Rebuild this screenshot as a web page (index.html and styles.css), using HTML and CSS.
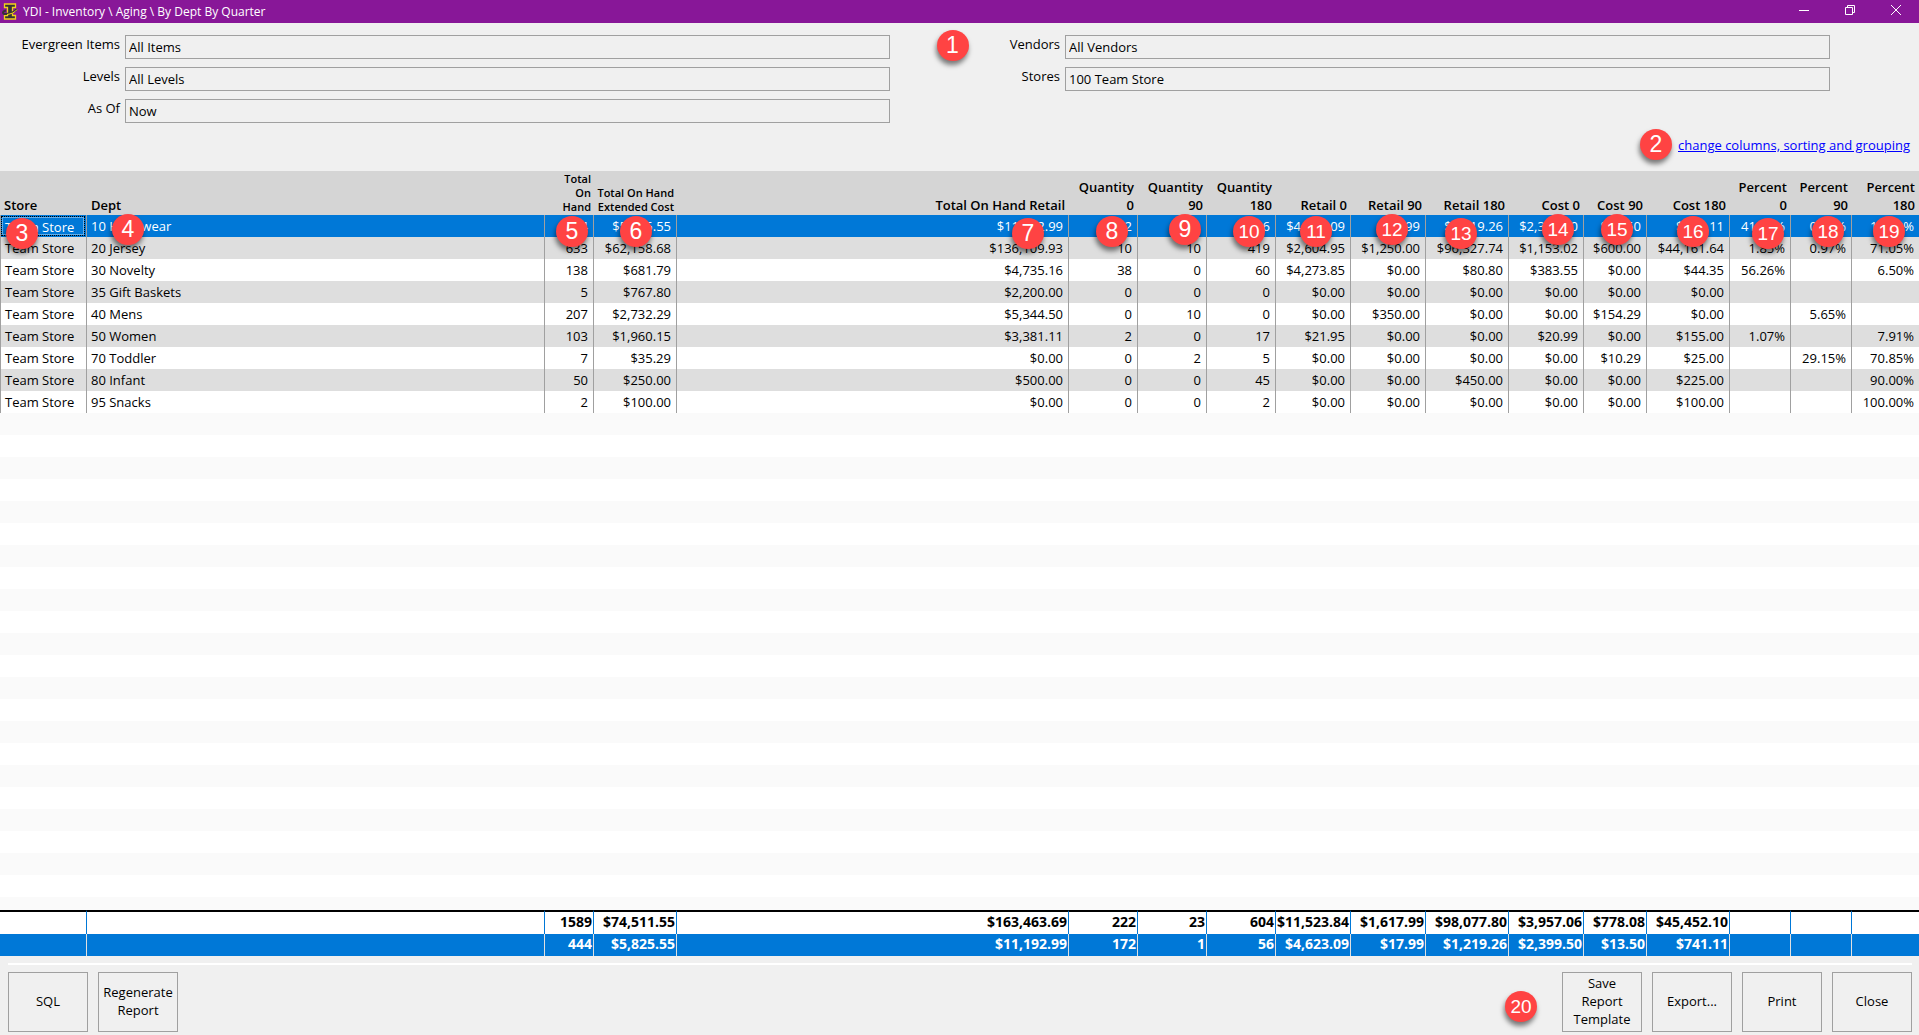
FILE: index.html
```
<!DOCTYPE html>
<html lang="en">
  <head>
    <meta charset="utf-8">
    <title>YDI - Inventory \ Aging \ By Dept By Quarter</title>
    <link rel="stylesheet" href="styles.css">
  </head>

  <body>
    <header class="titlebar">
      <svg class="app-icon" width="16" height="17" viewBox="0 0 16 17">
        <path d="M2.500 1 H13.500 V4.500 H10.500 V12.500 H13.500 V16 H2.500 V12.500 H5.500 V4.500 H2.500 Z" fill="#343434" stroke="#f2d11a" stroke-width="1.300"/>
        <path d="M4 7.500 C0 8.500 0 11.500 4 11 C9 10.500 14 8 14.500 6" fill="none" stroke="#343434" stroke-width="2"/>
        <path d="M5 11.500 C9 11 13 9.500 15 6.500" fill="none" stroke="#f2d11a" stroke-width="1"/>
      </svg>
      <span class="app-title">YDI - Inventory \ Aging \ By Dept By Quarter</span>
      <button class="window-btn" aria-label="Minimize">
        <svg width="12" height="12" viewBox="0 0 12 12"><path d="M1 6.500 H11"/></svg>
      </button>
      <button class="window-btn" aria-label="Restore">
        <svg width="12" height="12" viewBox="0 0 12 12"><path d="M1.500 3.500 H8.500 V10.500 H1.500 Z M3.500 3.500 V1.500 H10.500 V8.500 H8.500"/></svg>
      </button>
      <button class="window-btn" aria-label="Close window">
        <svg width="12" height="12" viewBox="0 0 12 12"><path d="M1 1 L11 11 M11 1 L1 11"/></svg>
      </button>
    </header>

    <form class="filters">
      <label for="items">Evergreen Items</label>
      <input id="items" type="text" value="All Items" readonly>
      <label for="vendors">Vendors</label>
      <input id="vendors" type="text" value="All Vendors" readonly>
      <label for="levels">Levels</label>
      <input id="levels" type="text" value="All Levels" readonly>
      <label for="stores">Stores</label>
      <input id="stores" type="text" value="100 Team Store" readonly>
      <label for="asof">As Of</label>
      <input id="asof" type="text" value="Now" readonly>
      <span class="badge badge-1">1</span>
    </form>

    <div class="link-row">
      <span class="badge">2</span>
      <a href="#">change columns, sorting and grouping</a>
    </div>

    <main class="report">
      <table class="grid">
        <colgroup>
          <col class="w-store">
          <col class="w-dept">
          <col class="w-hand">
          <col class="w-83">
          <col>
          <col class="w-69">
          <col class="w-69">
          <col class="w-69">
          <col class="w-75">
          <col class="w-75">
          <col class="w-83">
          <col class="w-75">
          <col class="w-63">
          <col class="w-83">
          <col class="w-61">
          <col class="w-61">
          <col class="w-67">
        </colgroup>
        <thead>
          <tr>
            <th class="text">Store</th>
            <th class="text">Dept</th>
            <th class="small">Total On Hand</th>
            <th class="small">Total On Hand Extended Cost</th>
            <th>Total On Hand Retail</th>
            <th>Quantity 0</th>
            <th>Quantity 90</th>
            <th>Quantity 180</th>
            <th>Retail 0</th>
            <th>Retail 90</th>
            <th>Retail 180</th>
            <th>Cost 0</th>
            <th>Cost 90</th>
            <th>Cost 180</th>
            <th>Percent 0</th>
            <th>Percent 90</th>
            <th>Percent 180</th>
          </tr>
        </thead>
        <tbody>
          <tr class="selected">
            <td class="text focused"><span class="focus-box">Team Store</span></td>
            <td class="text">10 Headwear</td>
            <td>444</td>
            <td>$5,825.55</td>
            <td>$11,192.99</td>
            <td>172</td>
            <td>1</td>
            <td>56</td>
            <td>$4,623.09</td>
            <td>$17.99</td>
            <td>$1,219.26</td>
            <td>$2,399.50</td>
            <td>$13.50</td>
            <td>$741.11</td>
            <td>41.19%</td>
            <td>0.23%</td>
            <td>12.72%</td>
          </tr>
          <tr class="alt">
            <td class="text">Team Store</td>
            <td class="text">20 Jersey</td>
            <td>633</td>
            <td>$62,158.68</td>
            <td>$136,109.93</td>
            <td>10</td>
            <td>10</td>
            <td>419</td>
            <td>$2,604.95</td>
            <td>$1,250.00</td>
            <td>$96,327.74</td>
            <td>$1,153.02</td>
            <td>$600.00</td>
            <td>$44,161.64</td>
            <td>1.85%</td>
            <td>0.97%</td>
            <td>71.05%</td>
          </tr>
          <tr>
            <td class="text">Team Store</td>
            <td class="text">30 Novelty</td>
            <td>138</td>
            <td>$681.79</td>
            <td>$4,735.16</td>
            <td>38</td>
            <td>0</td>
            <td>60</td>
            <td>$4,273.85</td>
            <td>$0.00</td>
            <td>$80.80</td>
            <td>$383.55</td>
            <td>$0.00</td>
            <td>$44.35</td>
            <td>56.26%</td>
            <td></td>
            <td>6.50%</td>
          </tr>
          <tr class="alt">
            <td class="text">Team Store</td>
            <td class="text">35 Gift Baskets</td>
            <td>5</td>
            <td>$767.80</td>
            <td>$2,200.00</td>
            <td>0</td>
            <td>0</td>
            <td>0</td>
            <td>$0.00</td>
            <td>$0.00</td>
            <td>$0.00</td>
            <td>$0.00</td>
            <td>$0.00</td>
            <td>$0.00</td>
            <td></td>
            <td></td>
            <td></td>
          </tr>
          <tr>
            <td class="text">Team Store</td>
            <td class="text">40 Mens</td>
            <td>207</td>
            <td>$2,732.29</td>
            <td>$5,344.50</td>
            <td>0</td>
            <td>10</td>
            <td>0</td>
            <td>$0.00</td>
            <td>$350.00</td>
            <td>$0.00</td>
            <td>$0.00</td>
            <td>$154.29</td>
            <td>$0.00</td>
            <td></td>
            <td>5.65%</td>
            <td></td>
          </tr>
          <tr class="alt">
            <td class="text">Team Store</td>
            <td class="text">50 Women</td>
            <td>103</td>
            <td>$1,960.15</td>
            <td>$3,381.11</td>
            <td>2</td>
            <td>0</td>
            <td>17</td>
            <td>$21.95</td>
            <td>$0.00</td>
            <td>$0.00</td>
            <td>$20.99</td>
            <td>$0.00</td>
            <td>$155.00</td>
            <td>1.07%</td>
            <td></td>
            <td>7.91%</td>
          </tr>
          <tr>
            <td class="text">Team Store</td>
            <td class="text">70 Toddler</td>
            <td>7</td>
            <td>$35.29</td>
            <td>$0.00</td>
            <td>0</td>
            <td>2</td>
            <td>5</td>
            <td>$0.00</td>
            <td>$0.00</td>
            <td>$0.00</td>
            <td>$0.00</td>
            <td>$10.29</td>
            <td>$25.00</td>
            <td></td>
            <td>29.15%</td>
            <td>70.85%</td>
          </tr>
          <tr class="alt">
            <td class="text">Team Store</td>
            <td class="text">80 Infant</td>
            <td>50</td>
            <td>$250.00</td>
            <td>$500.00</td>
            <td>0</td>
            <td>0</td>
            <td>45</td>
            <td>$0.00</td>
            <td>$0.00</td>
            <td>$450.00</td>
            <td>$0.00</td>
            <td>$0.00</td>
            <td>$225.00</td>
            <td></td>
            <td></td>
            <td>90.00%</td>
          </tr>
          <tr>
            <td class="text">Team Store</td>
            <td class="text">95 Snacks</td>
            <td>2</td>
            <td>$100.00</td>
            <td>$0.00</td>
            <td>0</td>
            <td>0</td>
            <td>2</td>
            <td>$0.00</td>
            <td>$0.00</td>
            <td>$0.00</td>
            <td>$0.00</td>
            <td>$0.00</td>
            <td>$100.00</td>
            <td></td>
            <td></td>
            <td>100.00%</td>
          </tr>
          <tr class="filler">
            <td colspan="17"></td>
          </tr>
        </tbody>
        <tfoot>
          <tr class="total">
            <td></td>
            <td></td>
            <td>1589</td>
            <td>$74,511.55</td>
            <td>$163,463.69</td>
            <td>222</td>
            <td>23</td>
            <td>604</td>
            <td>$11,523.84</td>
            <td>$1,617.99</td>
            <td>$98,077.80</td>
            <td>$3,957.06</td>
            <td>$778.08</td>
            <td>$45,452.10</td>
            <td></td>
            <td></td>
            <td></td>
          </tr>
          <tr class="total total-selected">
            <td></td>
            <td></td>
            <td>444</td>
            <td>$5,825.55</td>
            <td>$11,192.99</td>
            <td>172</td>
            <td>1</td>
            <td>56</td>
            <td>$4,623.09</td>
            <td>$17.99</td>
            <td>$1,219.26</td>
            <td>$2,399.50</td>
            <td>$13.50</td>
            <td>$741.11</td>
            <td></td>
            <td></td>
            <td></td>
          </tr>
        </tfoot>
      </table>

      <span class="badge badge-3">3</span>
      <span class="badge badge-4">4</span>
      <span class="badge badge-5">5</span>
      <span class="badge badge-6">6</span>
      <span class="badge badge-7">7</span>
      <span class="badge badge-8">8</span>
      <span class="badge badge-9">9</span>
      <span class="badge badge-10">10</span>
      <span class="badge badge-11">11</span>
      <span class="badge badge-12">12</span>
      <span class="badge badge-13">13</span>
      <span class="badge badge-14">14</span>
      <span class="badge badge-15">15</span>
      <span class="badge badge-16">16</span>
      <span class="badge badge-17">17</span>
      <span class="badge badge-18">18</span>
      <span class="badge badge-19">19</span>
    </main>

    <footer class="actions">
      <button class="action">SQL</button>
      <button class="action">Regenerate Report</button>
      <span class="badge badge-20">20</span>
      <button class="action">Save Report Template</button>
      <button class="action">Export...</button>
      <button class="action">Print</button>
      <button class="action">Close</button>
    </footer>
  </body>
</html>
```

FILE: styles.css
```
* {
  box-sizing: border-box;
}
body {
  display: flex;
  flex-direction: column;
  height: 100vh;
  margin: 0;
  background-color: #f0f0f0;
  color: #000;
  font-family: 'Open Sans', 'Noto Sans', sans-serif;
  font-size: 13px;
  line-height: 18px;
}
button,
input {
  font: inherit;
  color: inherit;
}

/* title bar */
.titlebar {
  display: flex;
  align-items: center;
  height: 23px;
  background-color: #881798;
  color: #fff;
}
.app-icon {
  margin: 0 5px 0 2px;
}
.app-title {
  flex: 1;
  font-size: 12px;
}
.window-btn {
  display: flex;
  align-items: center;
  justify-content: center;
  width: 46px;
  height: 23px;
  padding: 0 0 3px;
  border: 0;
  background: none;
}
.window-btn svg {
  fill: none;
  stroke: #fff;
  stroke-width: 1;
}

/* filters */
.filters {
  position: relative;
  display: grid;
  grid-template-columns: 120px 1fr 165px 1fr;
  column-gap: 5px;
  row-gap: 8px;
  padding: 12px 89px 0 0;
}
.filters label {
  text-align: right;
}
.filters input {
  width: 100%;
  height: 24px;
  padding: 0 3px;
  border: 1px solid #a0a0a0;
  background: none;
  outline: none;
}
.link-row {
  display: flex;
  align-items: center;
  justify-content: flex-end;
  gap: 6px;
  height: 48px;
  padding: 0 9px 5px 0;
}
.link-row a {
  color: #00f;
}

/* report grid */
.report {
  position: relative;
  flex: 1;
  min-height: 0;
}
.grid {
  width: 100%;
  height: 100%;
  table-layout: fixed;
  border-spacing: 0;
  background-color: #fff;
}
.w-store { width: 87px; }
.w-dept { width: 458px; }
.w-hand { width: 49px; }
.w-61 { width: 61px; }
.w-63 { width: 63px; }
.w-67 { width: 67px; }
.w-69 { width: 69px; }
.w-75 { width: 75px; }
.w-83 { width: 83px; }
.grid th {
  height: 44px;
  padding: 0 4px 1px;
  background-color: #d5d5d5;
  font-weight: 600;
  text-align: right;
  vertical-align: bottom;
}
.grid .small {
  padding: 0 3px 1px;
  font-size: 11px;
  line-height: 14px;
}
.grid td {
  height: 22px;
  padding: 0 5px;
  border-right: 1px solid #a0a0a0;
  line-height: 22px;
  text-align: right;
  white-space: nowrap;
}
.grid .text {
  padding-left: 4px;
  text-align: left;
}
.grid td:first-child {
  border-left: 1px solid #a0a0a0;
}
.grid td:last-child {
  border-right: 0;
}
.alt {
  background-color: #dedede;
}
.selected {
  background-color: #0078d7;
  color: #fff;
}
.grid .focused {
  padding: 0 2px 0 1px;
  border-left-color: #0078d7;
}
.focus-box {
  display: block;
  height: 18px;
  padding-left: 2px;
  border: 1px solid #66aee7;
  outline: 1px dotted #000;
  line-height: 18px;
}
.grid .filler td {
  height: auto;
  padding: 0;
  border: 0;
  background: repeating-linear-gradient(#fafafa 0 22px, #fff 22px 44px);
}
.grid .total td {
  padding: 0 1px;
  border-right-color: #0078d7;
  border-left: 0;
  font-size: 14px;
  font-weight: 700;
  line-height: 20px;
  vertical-align: top;
}
.grid .total:first-child td {
  height: 24px;
  border-top: 2px solid #000;
}
.grid .total-selected td {
  border-right-color: #e0e0e0;
}
.total-selected {
  background-color: #0078d7;
  color: #fff;
}

/* bottom buttons */
.actions {
  display: flex;
  gap: 10px;
  margin: 7px 7px 3px 8px;
  padding-top: 7px;
  border-top: 2px solid #fff;
}
.action {
  width: 80px;
  height: 60px;
  padding: 0 4px 2px;
  border: 1px solid #a0a0a0;
  background: none;
}

/* numbered callouts */
.badge {
  width: 32px;
  height: 31px;
  border-radius: 50%;
  background-color: #ff4343;
  box-shadow: -1px 4px 5px rgba(0, 0, 0, 0.5);
  color: #fff;
  font-family: 'Liberation Sans', Arial, sans-serif;
  font-size: 23px;
  line-height: 31px;
  text-align: center;
}
.badge-1 {
  position: absolute;
  top: 7px;
  left: calc(50% - 23px);
}
.report .badge {
  position: absolute;
  top: 45px;
}
.badge-10, .badge-11, .badge-12, .badge-13, .badge-14, .badge-15,
.badge-16, .badge-17, .badge-18, .badge-19, .badge-20 {
  font-size: 19px;
}
.badge-3 { left: 6px; }
.badge-4 { left: 112px; }
.badge-5 { left: 556px; }
.badge-6 { left: 620px; }
.badge-7 { right: 875px; }
.badge-8 { right: 791px; }
.badge-9 { right: 718px; }
.badge-10 { right: 654px; }
.badge-11 { right: 587px; }
.badge-12 { right: 511px; }
.badge-13 { right: 442px; }
.badge-14 { right: 345px; }
.badge-15 { right: 286px; }
.badge-16 { right: 210px; }
.badge-17 { right: 135px; }
.badge-18 { right: 75px; }
.badge-19 { right: 14px; }
.report .badge-4, .report .badge-9, .report .badge-12,
.report .badge-14, .report .badge-15 {
  top: 43px;
}
.report .badge-3, .report .badge-7, .report .badge-13, .report .badge-17 {
  top: 47px;
}
.badge-20 {
  margin: 19px 15px 0 auto;
}
```
